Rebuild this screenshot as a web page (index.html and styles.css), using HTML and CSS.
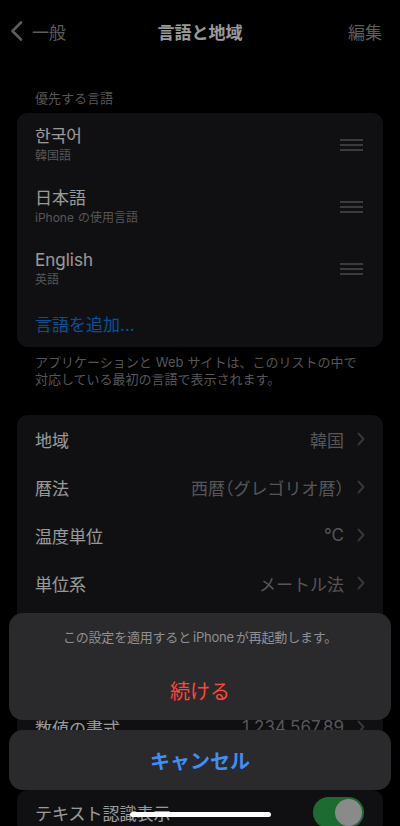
FILE: index.html
```html
<!DOCTYPE html>
<html lang="ja">
<head>
<meta charset="utf-8">
<title>言語と地域</title>
<link rel="stylesheet" href="styles.css">
</head>
<body>
<div class="screen">
  <header class="nav">
    <div class="nav-back">
      <svg class="back-chevron" width="13" height="20" viewBox="0 0 13 20"><path d="M11 1.5 L2.5 10 L11 18.5" fill="none" stroke="currentColor" stroke-width="2.6" stroke-linecap="round" stroke-linejoin="round"/></svg>
      <span>一般</span>
    </div>
    <div class="nav-title">言語と地域</div>
    <div class="nav-edit">編集</div>
  </header>

  <div class="section-header">優先する言語</div>
  <div class="card">
    <div class="lang-row">
      <div class="lang-text">
        <div class="lang-name">한국어</div>
        <div class="lang-sub">韓国語</div>
      </div>
      <div class="handle"><i></i><i></i><i></i></div>
    </div>
    <div class="lang-row">
      <div class="lang-text">
        <div class="lang-name">日本語</div>
        <div class="lang-sub">iPhone<span class="gap"></span>の使用言語</div>
      </div>
      <div class="handle"><i></i><i></i><i></i></div>
    </div>
    <div class="lang-row">
      <div class="lang-text">
        <div class="lang-name">English</div>
        <div class="lang-sub">英語</div>
      </div>
      <div class="handle"><i></i><i></i><i></i></div>
    </div>
    <div class="add-row">言語を追加...</div>
  </div>
  <p class="footer">アプリケーションと<span class="gap"></span>Web<span class="gap"></span>サイトは、このリストの中で<br>対応している最初の言語で表示されます。</p>

  <div class="card">
    <div class="row"><span class="label">地域</span><span class="value">韓国</span><svg class="chev" width="8" height="14" viewBox="0 0 8 14"><path d="M1.5 1.5 L6.5 7 L1.5 12.5" fill="none" stroke="currentColor" stroke-width="2" stroke-linecap="round" stroke-linejoin="round"/></svg></div>
    <div class="row"><span class="label">暦法</span><span class="value">西暦<span class="paren">（</span>グレゴリオ暦<span class="paren">）</span></span><svg class="chev" width="8" height="14" viewBox="0 0 8 14"><path d="M1.5 1.5 L6.5 7 L1.5 12.5" fill="none" stroke="currentColor" stroke-width="2" stroke-linecap="round" stroke-linejoin="round"/></svg></div>
    <div class="row"><span class="label">温度単位</span><span class="value">°C</span><svg class="chev" width="8" height="14" viewBox="0 0 8 14"><path d="M1.5 1.5 L6.5 7 L1.5 12.5" fill="none" stroke="currentColor" stroke-width="2" stroke-linecap="round" stroke-linejoin="round"/></svg></div>
    <div class="row"><span class="label">単位系</span><span class="value">メートル法</span><svg class="chev" width="8" height="14" viewBox="0 0 8 14"><path d="M1.5 1.5 L6.5 7 L1.5 12.5" fill="none" stroke="currentColor" stroke-width="2" stroke-linecap="round" stroke-linejoin="round"/></svg></div>
    <div class="row row-covered"><span class="label">週の最初の曜日</span><span class="value">日曜日</span><svg class="chev" width="8" height="14" viewBox="0 0 8 14"><path d="M1.5 1.5 L6.5 7 L1.5 12.5" fill="none" stroke="currentColor" stroke-width="2" stroke-linecap="round" stroke-linejoin="round"/></svg></div>
    <div class="row row-covered"><span class="label">日付の書式</span><span class="value">2022/08/19</span><svg class="chev" width="8" height="14" viewBox="0 0 8 14"><path d="M1.5 1.5 L6.5 7 L1.5 12.5" fill="none" stroke="currentColor" stroke-width="2" stroke-linecap="round" stroke-linejoin="round"/></svg></div>
    <div class="row"><span class="label">数値の書式</span><span class="value">1,234,567.89</span><svg class="chev" width="8" height="14" viewBox="0 0 8 14"><path d="M1.5 1.5 L6.5 7 L1.5 12.5" fill="none" stroke="currentColor" stroke-width="2" stroke-linecap="round" stroke-linejoin="round"/></svg></div>
  </div>

  <div class="card card-last">
    <div class="row"><span class="label">テキスト認識表示</span><span class="toggle"><span class="knob"></span></span></div>
  </div>

  <div class="dim"></div>

  <div class="sheet">
    <div class="sheet-group">
      <div class="sheet-msg">この設定を適用すると<span class="gap-sm"></span>iPhone<span class="gap-sm"></span>が再起動します。</div>
      <div class="sheet-action">続ける</div>
    </div>
    <div class="sheet-cancel">キャンセル</div>
  </div>

  <div class="home-indicator"></div>
</div>
</body>
</html>
```

FILE: styles.css
```css
* { box-sizing: border-box; }

html, body {
  margin: 0;
  padding: 0;
  background: #000;
}

body {
  font-family: "Inter", "Noto Sans CJK JP", "Noto Sans CJK KR", sans-serif;
  color: #fff;
}

.screen {
  position: relative;
  width: 400px;
  height: 826px;
  overflow: hidden;
  background: #000;
}

.gap {
  display: inline-block;
  width: 4px;
}

.gap-sm {
  display: inline-block;
  width: 2px;
}

/* Navigation bar */
.nav {
  height: 62px;
  display: flex;
  align-items: center;
  justify-content: space-between;
  padding: 0 18px 0 10px;
  position: relative;
}

.nav-back {
  display: flex;
  align-items: center;
  gap: 9px;
  color: #9a9a9a;
  font-size: 17px;
}

.back-chevron { display: block; }

.nav-title {
  position: absolute;
  left: 0;
  right: 0;
  text-align: center;
  font-size: 17px;
  font-weight: 600;
  color: #fff;
  pointer-events: none;
}

.nav-edit {
  font-size: 17px;
  color: #9a9a9a;
}

/* Sections */
.section-header {
  margin-top: 27px;
  padding-left: 35px;
  font-size: 13px;
  line-height: 18px;
  color: #8e8e93;
}

.card {
  margin: 6px 17px 0;
  background: #1c1c1e;
  border-radius: 11px;
  overflow: hidden;
}

.lang-row {
  height: 62px;
  display: flex;
  align-items: center;
  justify-content: space-between;
  padding: 0 20px 0 18px;
}

.lang-name {
  font-size: 17px;
  line-height: 22px;
  color: #fff;
}

.lang-sub {
  margin-top: 1px;
  font-size: 12px;
  line-height: 16px;
  color: #8e8e93;
}

.handle {
  width: 23px;
  display: flex;
  flex-direction: column;
  gap: 3px;
  margin-top: 2px;
}

.handle i {
  display: block;
  height: 2px;
  background: #636366;
}

.add-row {
  height: 48px;
  display: flex;
  align-items: center;
  padding-left: 18px;
  font-size: 17px;
  color: #0a84ff;
}

.footer {
  margin: 0;
  padding: 7px 18px 0 35px;
  font-size: 13px;
  line-height: 17px;
  color: #8e8e93;
}

.footer + .card { margin-top: 27px; }

.row {
  height: 48px;
  display: flex;
  align-items: center;
  padding: 0 18px;
  font-size: 17px;
}

.row-covered {
  visibility: hidden;
}

.label {
  flex: 1;
  color: #fff;
}

.value {
  color: #8e8e93;
  margin-right: 13px;
}

.paren {
  font-feature-settings: "halt";
}

.chev {
  display: block;
  color: #5a5a5e;
}

.card-last {
  margin-top: 39px;
}

.card-last .row {
  height: 44px;
}

.toggle {
  width: 51px;
  height: 31px;
  border-radius: 16px;
  background: #30b552;
  position: relative;
  margin-right: 1px;
}

.knob {
  position: absolute;
  top: 2px;
  right: 2px;
  width: 27px;
  height: 27px;
  border-radius: 50%;
  background: #e6e6e6;
}

/* Dimming overlay */
.dim {
  position: absolute;
  inset: 0;
  background: rgba(0, 0, 0, 0.4);
}

/* Action sheet */
.sheet {
  position: absolute;
  left: 9px;
  right: 9px;
  top: 613px;
  display: flex;
  flex-direction: column;
  gap: 10px;
}

.sheet-group {
  background: #2a2a2c;
  border-radius: 14px;
  overflow: hidden;
}

.sheet-msg {
  height: 47px;
  padding-top: 15px;
  text-align: center;
  font-size: 13px;
  line-height: 18px;
  color: #8e8e93;
  letter-spacing: -0.2px;
}

.sheet-action {
  height: 60px;
  display: flex;
  align-items: center;
  justify-content: center;
  font-size: 20px;
  color: #ff453a;
}

.sheet-cancel {
  height: 60px;
  background: #2a2a2c;
  border-radius: 14px;
  display: flex;
  align-items: center;
  justify-content: center;
  font-size: 20px;
  font-weight: 700;
  color: #3f8ff5;
}

.home-indicator {
  position: absolute;
  left: 130px;
  top: 812px;
  width: 141px;
  height: 5px;
  border-radius: 3px;
  background: #fff;
}
```
